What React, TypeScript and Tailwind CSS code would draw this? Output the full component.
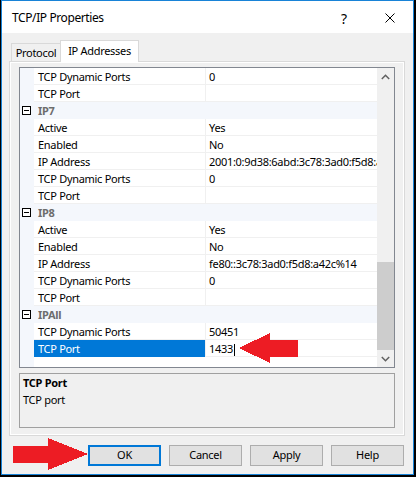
import React from "react";

type Row =
  | { kind: "cat"; name: string }
  | { kind: "prop"; name: string; value: string; selected?: boolean };

const rows: Row[] = [
  { kind: "prop", name: "TCP Dynamic Ports", value: "0" },
  { kind: "prop", name: "TCP Port", value: "" },
  { kind: "cat", name: "IP7" },
  { kind: "prop", name: "Active", value: "Yes" },
  { kind: "prop", name: "Enabled", value: "No" },
  { kind: "prop", name: "IP Address", value: "2001:0:9d38:6abd:3c78:3ad0:f5d8:a42c" },
  { kind: "prop", name: "TCP Dynamic Ports", value: "0" },
  { kind: "prop", name: "TCP Port", value: "" },
  { kind: "cat", name: "IP8" },
  { kind: "prop", name: "Active", value: "Yes" },
  { kind: "prop", name: "Enabled", value: "No" },
  { kind: "prop", name: "IP Address", value: "fe80::3c78:3ad0:f5d8:a42c%14" },
  { kind: "prop", name: "TCP Dynamic Ports", value: "0" },
  { kind: "prop", name: "TCP Port", value: "" },
  { kind: "cat", name: "IPAll" },
  { kind: "prop", name: "TCP Dynamic Ports", value: "50451" },
  { kind: "prop", name: "TCP Port", value: "1433", selected: true },
];

function CollapseBox() {
  return (
    <div className="ml-[2px] w-[9px] h-[9px] border border-black bg-white flex items-center justify-center">
      <div className="w-[5px] h-px bg-black" />
    </div>
  );
}

function GridRow({ row }: { row: Row }) {
  if (row.kind === "cat") {
    return (
      <div className="flex h-[17px] items-center bg-[#f4f7fc]">
        <div className="w-[14px] h-full flex items-center">
          <CollapseBox />
        </div>
        <div className="pl-[4px] pt-px font-bold text-[#6d6d6d] leading-[16px]">{row.name}</div>
      </div>
    );
  }
  return (
    <div className="flex h-[17px]">
      <div className="w-[14px] bg-[#f4f7fc]" />
      <div
        className={
          row.selected
            ? "w-[171px] pl-[4px] pt-px leading-[16px] bg-[#0078d7] text-white whitespace-nowrap"
            : "w-[171px] pl-[4px] pt-px leading-[15px] border-b border-[#f0f0f0] whitespace-nowrap"
        }
      >
        {row.name}
      </div>
      <div className="w-px bg-[#f0f0f0]" />
      <div className="w-[171px] pl-[3px] pt-px leading-[15px] border-b border-[#f0f0f0] overflow-hidden whitespace-nowrap">
        {row.value}
        {row.selected ? <span className="inline-block w-px h-[13px] bg-black align-middle ml-px" /> : null}
      </div>
    </div>
  );
}

function Chevron({ up }: { up: boolean }) {
  return (
    <svg width="9" height="6" viewBox="0 0 9 6">
      <path
        d={up ? "M0.8 5 L4.5 1.3 L8.2 5" : "M0.8 1 L4.5 4.7 L8.2 1"}
        fill="none"
        stroke="#606060"
        strokeWidth="1.5"
      />
    </svg>
  );
}

function PropertyGrid() {
  return (
    <div className="w-[376px] h-[301px] border border-[#828790] flex bg-white">
      <div className="w-[357px] flex flex-col">
        {rows.map((r, i) => (
          <GridRow key={i} row={r} />
        ))}
        <div className="flex flex-1">
          <div className="w-[14px] bg-[#f4f7fc]" />
          <div className="flex-1 bg-white" />
        </div>
      </div>
      <div className="w-[17px] bg-[#f0f0f0] flex flex-col">
        <div className="h-[17px] flex items-center justify-center">
          <Chevron up />
        </div>
        <div className="flex-1">
          <div className="mt-[177px] h-[88px] bg-[#cdcdcd]" />
        </div>
        <div className="h-[17px] flex items-center justify-center">
          <Chevron up={false} />
        </div>
      </div>
    </div>
  );
}

function DialogButton({ label, focused }: { label: string; focused?: boolean }) {
  return (
    <div
      className={
        focused
          ? "w-[73px] h-[21px] border-2 border-[#0078d7] bg-[#e1e1e1] flex items-center justify-center"
          : "w-[73px] h-[21px] border border-[#adadad] bg-[#e1e1e1] flex items-center justify-center"
      }
    >
      {label}
    </div>
  );
}

export default function App() {
  return (
    <div className="relative w-[416px] h-[477px] bg-black pl-px pr-[2px] pb-[2px] font-['Noto_Sans',sans-serif] text-[11px] tracking-[-0.3px] text-black">
      <div className="w-full h-full border border-[#1883d7] bg-[#f0f0f0] flex flex-col">
        {/* caption bar */}
        <div className="h-[32px] bg-white flex items-center shrink-0">
          <div className="flex-1 pl-[10px] pt-[2px] text-[12px] tracking-[-0.4px]">TCP/IP Properties</div>
          <div className="w-[46px] h-full flex items-center justify-center text-[14px] pt-[2px]">?</div>
          <div className="w-[46px] h-full flex items-center justify-center pt-px">
            <svg width="10" height="10" viewBox="0 0 10 10">
              <path d="M0.5 0.5 L9.5 9.5 M9.5 0.5 L0.5 9.5" stroke="#000" strokeWidth="1" />
            </svg>
          </div>
        </div>

        {/* dialog body */}
        <div className="flex-1 flex flex-col pt-[7px] ml-[7px] mr-[8px]">
          {/* tab headers */}
          <div className="h-[21px] flex items-end pl-[2px]">
            <div className="w-[49px] h-[18px] border-l border-t border-[#d9d9d9] bg-[#f0f0f0] flex items-center justify-center pt-px">
              Protocol
            </div>
            <div className="relative z-10 w-[79px] h-[22px] -mb-px border-l border-t border-r border-[#d9d9d9] bg-white flex items-start justify-center pt-[2px] leading-[16px]">
              IP Addresses
            </div>
          </div>

          {/* tab page */}
          <div className="h-[375px] border border-[#d9d9d9]">
            <div className="h-full border border-white bg-[#f0f0f0] flex flex-col pt-[4px] px-[8px]">
              <PropertyGrid />
              <div className="mt-[5px] h-[55px] border border-[#a0a0a0] bg-[#f0f0f0] pl-[3px] leading-[17px]">
                <div className="font-bold">TCP Port</div>
                <div>TCP port</div>
              </div>
            </div>
          </div>

          {/* buttons */}
          <div className="mt-[9px] flex justify-end gap-[8px] pr-px">
            <DialogButton label="OK" focused />
            <DialogButton label="Cancel" />
            <DialogButton label="Apply" />
            <DialogButton label="Help" />
          </div>
        </div>
      </div>

      {/* red callout arrows */}
      <svg
        className="absolute inset-0 pointer-events-none"
        width="416"
        height="477"
        viewBox="0 0 416 477"
        shapeRendering="crispEdges"
      >
        <polygon points="239,348 270,333 270,340 298,340 298,357 270,357 270,363" fill="#ed1c24" />
        <polygon points="13,446 48,446 48,438 88,454 48,470 48,463 13,463" fill="#ed1c24" />
      </svg>
    </div>
  );
}
